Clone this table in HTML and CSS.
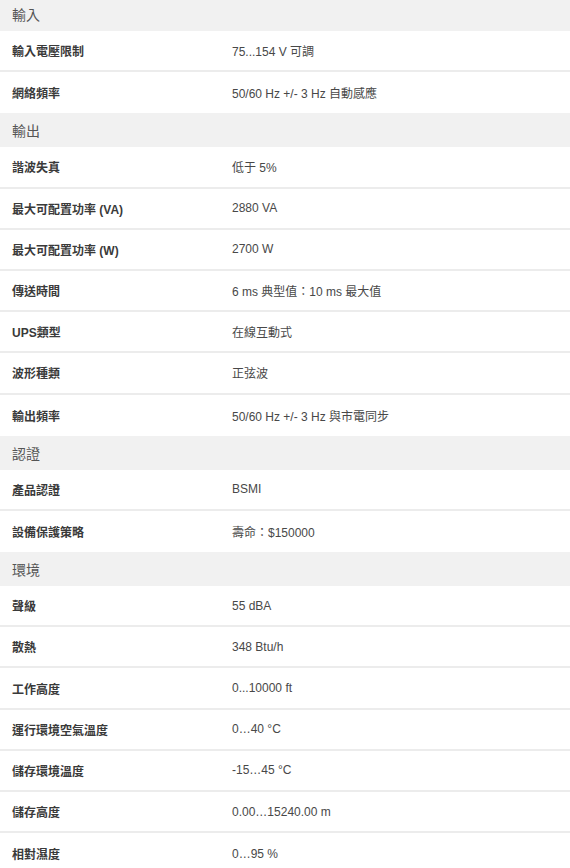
FILE: index.html
```html
<!DOCTYPE html>
<html lang="zh-Hant">
<head>
<meta charset="utf-8">
<title>規格</title>
<link rel="stylesheet" href="styles.css">
</head>
<body>
<div class="specs">
  <section class="group">
    <h3 class="group-title">輸入</h3>
    <div class="row"><div class="label">輸入電壓限制</div><div class="value">75...154 V 可調</div></div>
    <div class="row"><div class="label">網絡頻率</div><div class="value">50/60 Hz +/- 3 Hz 自動感應</div></div>
  </section>
  <section class="group">
    <h3 class="group-title">輸出</h3>
    <div class="row"><div class="label">諧波失真</div><div class="value">低于 5%</div></div>
    <div class="row"><div class="label">最大可配置功率 (VA)</div><div class="value">2880 VA</div></div>
    <div class="row"><div class="label">最大可配置功率 (W)</div><div class="value">2700 W</div></div>
    <div class="row"><div class="label">傳送時間</div><div class="value">6 ms 典型值：10 ms 最大值</div></div>
    <div class="row"><div class="label">UPS類型</div><div class="value">在線互動式</div></div>
    <div class="row"><div class="label">波形種類</div><div class="value">正弦波</div></div>
    <div class="row"><div class="label">輸出頻率</div><div class="value">50/60 Hz +/- 3 Hz 與市電同步</div></div>
  </section>
  <section class="group">
    <h3 class="group-title">認證</h3>
    <div class="row"><div class="label">產品認證</div><div class="value">BSMI</div></div>
    <div class="row"><div class="label">設備保護策略</div><div class="value">壽命：$150000</div></div>
  </section>
  <section class="group">
    <h3 class="group-title">環境</h3>
    <div class="row"><div class="label">聲級</div><div class="value">55 dBA</div></div>
    <div class="row"><div class="label">散熱</div><div class="value">348 Btu/h</div></div>
    <div class="row"><div class="label">工作高度</div><div class="value">0...10000 ft</div></div>
    <div class="row"><div class="label">運行環境空氣溫度</div><div class="value">0…40 °C</div></div>
    <div class="row"><div class="label">儲存環境溫度</div><div class="value">-15…45 °C</div></div>
    <div class="row"><div class="label">儲存高度</div><div class="value">0.00…15240.00 m</div></div>
    <div class="row"><div class="label">相對濕度</div><div class="value">0…95 %</div></div>
  </section>
</div>
</body>
</html>
```

FILE: styles.css
```css
html, body {
  margin: 0;
  padding: 0;
  background: #ffffff;
}

body {
  font-family: "Liberation Sans", Arial, "Noto Sans CJK TC", sans-serif;
  color: #333333;
}

.specs {
  margin-top: -3px;
}

.group {
  display: flex;
  flex-direction: column;
}

.group-title {
  margin: 0;
  height: 34px;
  box-sizing: border-box;
  padding-left: 12px;
  display: flex;
  align-items: center;
  background: #f1f1f1;
  font-size: 14px;
  font-weight: normal;
  color: #555555;
}

.row {
  height: 41.2px;
  box-sizing: border-box;
  display: grid;
  grid-template-columns: 232px 1fr;
  align-items: center;
  border-bottom: 2px solid #ececec;
}

.row:last-child {
  border-bottom: none;
}

.label {
  padding-left: 12px;
  font-size: 12px;
  font-weight: 600;
  color: #3a3a3a;
}

.value {
  font-size: 12px;
  color: #484848;
}
```
